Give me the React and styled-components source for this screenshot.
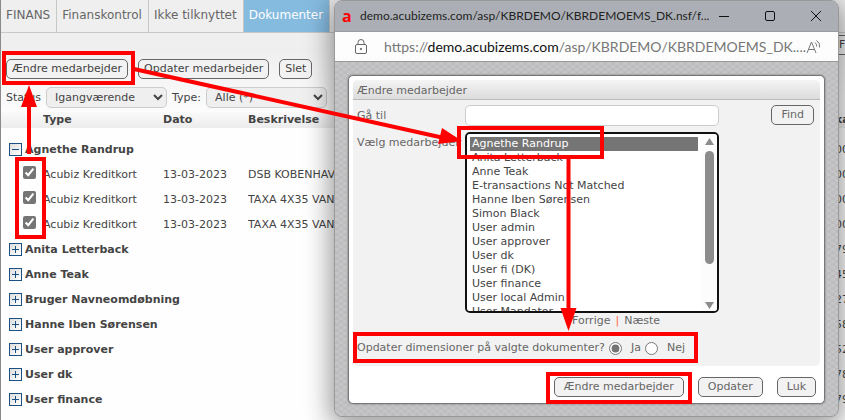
import React from 'react';
import styled, { createGlobalStyle } from 'styled-components';

const GlobalStyle = createGlobalStyle`
  * {
    box-sizing: border-box;
  }

  body {
    margin: 0;
    background: #fefefe;
    color: #444;
    font: 11px/14px 'DejaVu Sans', sans-serif;
  }

  input,
  select,
  button {
    margin: 0;
    font: inherit;
    color: inherit;
  }
`;

const Screen = styled.div`
  position: relative;
  min-height: 100vh;
  overflow: hidden;
  border-left: 1px solid #8a8a8a;
`;

const Toolbar = styled.header`
  background: linear-gradient(#efefef 50px, #fcfcfc);
`;

const Tabs = styled.nav`
  display: flex;
  height: 33px;
  border-bottom: 1px solid #c8c8c8;
`;

const Tab = styled.a`
  padding: 0 6px 0 5px;
  border-right: 1px solid #c8c8c8;
  background: ${({ $active }) => ($active ? '#86bbe0' : 'transparent')};
  color: ${({ $active }) => ($active ? '#fff' : '#666')};
  font-size: 12px;
  line-height: 31px;
  text-decoration: none;
  white-space: nowrap;
`;

const Button = styled.button`
  height: 20px;
  padding: 0 5px;
  border: 1px solid #666;
  border-radius: 5px;
  background: #f2f2f2;
  line-height: 16px;
  white-space: nowrap;
`;

const SearchRow = styled.div`
  display: flex;
  justify-content: flex-end;
  height: 26px;
  padding-top: 2px;
`;

const SearchButton = styled(Button)`
  width: 20px;
  margin-right: -8px;
  text-align: left;
`;

const Actions = styled.div`
  display: flex;
  gap: 10px;
  padding: 0 5px 8px;
`;

const Filters = styled.div`
  display: flex;
  align-items: center;
  gap: 5px;
  padding: 0 5px 4px;
`;

const FilterSelect = styled.select`
  width: 121px;
  height: 21px;
  padding-left: 4px;
  border: 1px solid #ccc;
  border-radius: 5px;
  background: #efefef;
`;

const DocTable = styled.table`
  width: 100%;
  border-collapse: collapse;
  table-layout: fixed;
  white-space: nowrap;

  th,
  td {
    padding: 0;
    overflow: hidden;
    text-align: left;
  }

  thead th {
    height: 16px;
    background: linear-gradient(#fafafa, #ececec);
  }

  tbody td,
  tbody th {
    height: 25px;
  }

  tbody::before {
    content: '';
    display: block;
    height: 9px;
  }
`;

const GroupName = styled.div`
  display: flex;
  align-items: center;
  gap: 3px;
  padding-left: 8px;
`;

const Toggle = styled.button`
  display: grid;
  width: 13px;
  height: 13px;
  padding: 0;
  border: 1px solid #1c4f82;
  background: linear-gradient(135deg, #ddd, #fff);
  place-items: center;
`;

const CheckCell = styled.td`
  && {
    padding: 0 0 5px 22px;
    line-height: 0;
  }
`;

const Check = styled.input`
  width: 13px;
  height: 13px;
  accent-color: #757575;
`;

const Window = styled.section`
  position: absolute;
  top: 0;
  right: 6px;
  left: 333px;
  overflow: hidden;
  border: 1px solid #999;
  border-radius: 8px;
  background: #c0c0c2;
`;

const WindowShadow = styled.div`
  position: absolute;
  top: 0;
  right: 6px;
  bottom: 4px;
  left: 333px;
  border-radius: 8px;
  box-shadow: 0 6px 26px 4px rgba(0, 0, 0, 0.4);
`;

const TitleBar = styled.div`
  display: flex;
  align-items: center;
  height: 30px;
  padding: 0 17px 0 7px;
  background: #abafb5;
  color: #222;
  font: 12px/18px Lato, sans-serif;
`;

const Favicon = styled.span`
  width: 18px;
  color: #f00;
  font: bold 16px/18px 'Open Sans', sans-serif;
`;

const WindowTitle = styled.span`
  flex: 1;
  overflow: hidden;
  white-space: nowrap;
`;

const WindowControls = styled.div`
  display: flex;
  gap: 36px;
  color: #111;
`;

const IconButton = styled.button`
  display: flex;
  padding: 0;
  border: 0;
  background: none;
`;

const AddressBar = styled.div`
  display: flex;
  align-items: center;
  height: 31px;
  padding: 0 16px 0 20px;
  border-top: 1px solid #999ca2;
  border-bottom: 1px solid #999;
  background: #fdfdfd;
  color: #777;
  font: 14px/20px Lato, sans-serif;
`;

const Url = styled.span`
  flex: 1;
  overflow: hidden;
  padding-left: 17px;
  white-space: nowrap;

  b {
    color: #111;
    font-weight: normal;
  }
`;

const Backdrop = styled.div`
  padding: 13px 13px 12px;
  background: repeating-conic-gradient(#bdbdbf 0 25%, #c5c5c7 0 50%) 0 0 / 8px 6px;
`;

const Dialog = styled.form`
  padding: 4px;
  border: 1px solid #777;
  border-radius: 5px;
  background: #fff;
  box-shadow: 0 0 2px #666;
  color: #666;
`;

const Panel = styled.div`
  overflow: hidden;
  border-radius: 5px;
  background: #f2f2f2;
`;

const PanelTitle = styled.h1`
  height: 20px;
  margin: 0;
  padding: 0 4px;
  border-bottom: 1px solid #bbb;
  background: linear-gradient(#f4f4f4, #dcdcdc);
  font-size: 11px;
  font-weight: normal;
  line-height: 22px;
`;

const Fields = styled.div`
  display: grid;
  grid-template-columns: 108px 254px 1fr;
  row-gap: 6px;
  padding: 5px 6px 0 4px;

  label {
    line-height: 21px;
    white-space: nowrap;
  }
`;

const SearchInput = styled.input`
  width: 100%;
  height: 21px;
  border: 1px solid #ccc;
  border-radius: 5px;
  background: #fff;
`;

const FindCell = styled.div`
  text-align: right;
`;

const DialogButton = styled(Button)`
  padding: 0 9px;
`;

const ListBox = styled.div`
  display: flex;
  height: 181px;
  overflow: hidden;
  border: 2px solid #111;
  border-radius: 5px;
  background: #fff;
`;

const EmployeeList = styled.select`
  flex: 1;
  min-width: 0;
  height: 100%;
  padding: 3px 4px 0 3px;
  border: 0;
  outline: 0;
  background: #fff;
  color: #444;
  scrollbar-width: none;

  option {
    min-height: 14px;
    padding: 0 2px;
    line-height: 14px;
  }

  option:checked {
    background: linear-gradient(#757575, #757575);
    -webkit-text-fill-color: #fff;
  }
`;

const ScrollBar = styled.div`
  display: flex;
  flex-direction: column;
  align-items: center;
  width: 15px;
  padding: 4px 0 2px;
  background: #fcfcfc;
`;

const ScrollThumb = styled.div`
  width: 9px;
  height: 66%;
  margin: 6px 0 auto;
  border-radius: 5px;
  background: #8b8b8b;
`;

const Pager = styled.div`
  display: flex;
  justify-content: flex-end;
  gap: 5px;
  grid-column: 1 / 3;
  margin-top: -5px;
  padding-right: 59px;
  color: #f63;

  a {
    color: #666;
    text-decoration: none;
  }
`;

const Question = styled.fieldset`
  display: flex;
  align-items: center;
  min-width: 0;
  height: 38px;
  margin: 0;
  padding: 2px 4px 0;
  border: 0;
  white-space: nowrap;

  label {
    display: flex;
    align-items: center;
    gap: 9px;
    padding-left: 4px;
  }

  input {
    width: 13px;
    height: 13px;
    accent-color: #757575;
  }
`;

const DialogActions = styled.div`
  display: flex;
  justify-content: flex-end;
  gap: 14px;
  padding: 11px 4px 2px;
`;

const Annotations = styled.svg`
  position: absolute;
  top: 0;
  left: 0;
  pointer-events: none;
`;

const tabs = ['FINANS', 'Finanskontrol', 'Ikke tilknyttet', 'Dokumenter'];

const groups = [
  {
    name: 'Agnethe Randrup',
    amount: '00',
    documents: [
      { text: 'DSB KOBENHAVN', amount: '00' },
      { text: 'TAXA 4X35 VANL', amount: '00' },
      { text: 'TAXA 4X35 VANL', amount: '00' },
    ],
  },
  { name: 'Anita Letterback', amount: '79' },
  { name: 'Anne Teak', amount: '45' },
  { name: 'Bruger Navneomdøbning', amount: '27' },
  { name: 'Hanne Iben Sørensen', amount: '58' },
  { name: 'User approver', amount: '52' },
  { name: 'User dk', amount: '78' },
  { name: 'User finance', amount: '79' },
];

const employees = [
  'Agnethe Randrup',
  'Anita Letterback',
  'Anne Teak',
  'E-transactions Not Matched',
  'Hanne Iben Sørensen',
  'Simon Black',
  'User admin',
  'User approver',
  'User dk',
  'User fi (DK)',
  'User finance',
  'User local Admin',
  'User Mandator',
  'User no',
  'User se',
  'User traveller',
  'User uk',
];

const Group = ({ group }) => (
  <>
    <tr>
      <th colSpan={4} scope="rowgroup">
        <GroupName>
          <Toggle type="button" aria-label={group.documents ? 'Skjul' : 'Vis'}>
            <svg width="7" height="7" stroke="#1c4f82">
              <path d={group.documents ? 'M0 3.5h7' : 'M0 3.5h7M3.5 0v7'} />
            </svg>
          </Toggle>
          {group.name}
        </GroupName>
      </th>
      <td />
      <td>{group.amount}</td>
    </tr>
    {group.documents && group.documents.map((doc, i) => (
      <tr key={i}>
        <CheckCell>
          <Check type="checkbox" defaultChecked aria-label={doc.text} />
        </CheckCell>
        <td>Acubiz Kreditkort</td>
        <td>13-03-2023</td>
        <td>{doc.text}</td>
        <td />
        <td>{doc.amount}</td>
      </tr>
    ))}
  </>
);

const Documents = () => (
  <DocTable>
    <colgroup>
      <col style={{ width: 42 }} />
      <col style={{ width: 120 }} />
      <col style={{ width: 85 }} />
      <col style={{ width: 120 }} />
      <col />
      <col style={{ width: 10 }} />
    </colgroup>
    <thead>
      <tr>
        <th />
        <th>Type</th>
        <th>Dato</th>
        <th>Beskrivelse</th>
        <th />
        <th>ka</th>
      </tr>
    </thead>
    <tbody>
      {groups.map(group => <Group key={group.name} group={group} />)}
    </tbody>
  </DocTable>
);

const Popup = () => (
  <Window>
    <TitleBar>
      <Favicon>a</Favicon>
      <WindowTitle>demo.acubizems.com/asp/KBRDEMO/KBRDEMOEMS_DK.nsf/f...</WindowTitle>
      <WindowControls>
        <IconButton aria-label="Minimer">
          <svg width="10" height="10" stroke="currentColor"><path d="M0 5.5h10" /></svg>
        </IconButton>
        <IconButton aria-label="Maksimer">
          <svg width="10" height="10" fill="none" stroke="currentColor">
            <rect x=".5" y=".5" width="9" height="9" rx="1.5" />
          </svg>
        </IconButton>
        <IconButton aria-label="Luk vindue">
          <svg width="10" height="10" stroke="currentColor"><path d="m0 0 10 10M10 0 0 10" /></svg>
        </IconButton>
      </WindowControls>
    </TitleBar>
    <AddressBar>
      <svg width="12" height="16" fill="none" stroke="#666">
        <rect x=".5" y="5.5" width="11" height="9" rx="1.5" />
        <path d="M3 5.5v-2a3 3 0 0 1 6 0v2" />
        <circle cx="6" cy="10" r=".7" fill="#666" />
      </svg>
      <Url>https://<b>demo.acubizems.com</b>/asp/KBRDEMO/KBRDEMOEMS_DK....</Url>
      <IconButton aria-label="Læs højt">
        <svg width="16" height="16" fill="none" stroke="#777">
          <path d="m1 14 4.500-11L10 14M2.500 10.500h6M9 3.500q2 1.500 1.500 4M10.500 1.500q4 2.500 3 7" />
        </svg>
      </IconButton>
    </AddressBar>
    <Backdrop>
      <Dialog onSubmit={e => e.preventDefault()}>
        <Panel>
          <PanelTitle>Ændre medarbejder</PanelTitle>
          <Fields>
            <label htmlFor="goto">Gå til</label>
            <SearchInput id="goto" type="text" />
            <FindCell>
              <DialogButton type="button">Find</DialogButton>
            </FindCell>
            <label htmlFor="employee">Vælg medarbejder</label>
            <ListBox>
              <EmployeeList id="employee" size={12} defaultValue={employees[0]}>
                {employees.map(name => <option key={name}>{name}</option>)}
              </EmployeeList>
              <ScrollBar aria-hidden="true">
                <svg width="9" height="7" fill="#8b8b8b"><path d="M0 7 4.500 0 9 7z" /></svg>
                <ScrollThumb />
                <svg width="9" height="7" fill="#8b8b8b"><path d="m0 0 4.500 7L9 0z" /></svg>
              </ScrollBar>
            </ListBox>
            <span />
            <Pager>
              <a href="#forrige">Forrige</a>
              |
              <a href="#naeste">Næste</a>
            </Pager>
          </Fields>
          <Question aria-labelledby="question">
            <span id="question">Opdater dimensioner på valgte dokumenter?</span>
            <label>
              <input type="radio" name="update" defaultChecked />
              Ja
            </label>
            <label>
              <input type="radio" name="update" />
              Nej
            </label>
          </Question>
        </Panel>
        <DialogActions>
          <DialogButton>Ændre medarbejder</DialogButton>
          <DialogButton type="button">Opdater</DialogButton>
          <DialogButton type="button">Luk</DialogButton>
        </DialogActions>
      </Dialog>
    </Backdrop>
  </Window>
);

const Guide = () => (
  <Annotations width="845" height="420" fill="none" stroke="#f00" strokeWidth="4">
    <rect x="3" y="53" width="129" height="30" />
    <rect x="16" y="159" width="27" height="78" />
    <rect x="458" y="128" width="143" height="29" />
    <rect x="354" y="334" width="341" height="27" />
    <rect x="547" y="374" width="142" height="28" />
    <path d="M28 154V104M133 69l310 69M567.500 158V311" />
    <g fill="#f00" stroke="none">
      <path d="m28 85 8 22H20z" />
      <path d="m461 141-24 3 4-16z" />
      <path d="m567.500 331-8-23h16z" />
    </g>
  </Annotations>
);

const App = () => (
  <Screen>
    <GlobalStyle />
    <Toolbar>
      <Tabs>
        {tabs.map(tab => (
          <Tab key={tab} href="#" $active={tab === 'Dokumenter'}>{tab}</Tab>
        ))}
      </Tabs>
      <SearchRow>
        <SearchButton>F</SearchButton>
      </SearchRow>
      <Actions>
        <Button>Ændre medarbejder</Button>
        <Button>Opdater medarbejder</Button>
        <Button>Slet</Button>
      </Actions>
      <Filters>
        <label htmlFor="status">Status</label>
        <FilterSelect id="status"><option>Igangværende</option></FilterSelect>
        <label htmlFor="type">Type:</label>
        <FilterSelect id="type"><option>Alle (*)</option></FilterSelect>
      </Filters>
    </Toolbar>
    <Documents />
    <WindowShadow />
    <Popup />
    <Guide />
  </Screen>
);

export default App;
